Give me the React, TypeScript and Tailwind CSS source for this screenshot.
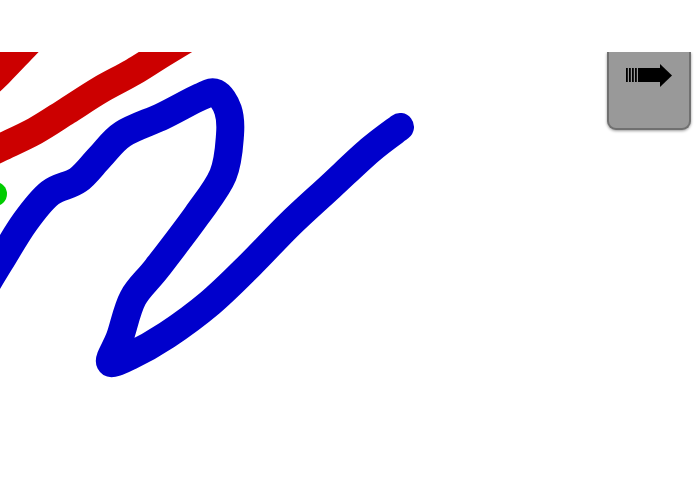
import React from "react";

type P = [number, number];

function smooth(points: P[]): string {
  if (points.length < 2) return "";
  let d = `M ${points[0][0]} ${points[0][1]}`;
  for (let i = 0; i < points.length - 1; i++) {
    const p0 = points[i - 1] || points[i];
    const p1 = points[i];
    const p2 = points[i + 1];
    const p3 = points[i + 2] || p2;
    const c1x = p1[0] + (p2[0] - p0[0]) / 6;
    const c1y = p1[1] + (p2[1] - p0[1]) / 6;
    const c2x = p2[0] - (p3[0] - p1[0]) / 6;
    const c2y = p2[1] - (p3[1] - p1[1]) / 6;
    d += ` C ${c1x} ${c1y} ${c2x} ${c2y} ${p2[0]} ${p2[1]}`;
  }
  return d;
}

const blue: P[] = [
  [-20, 295],
  [0, 262],
  [25, 222],
  [50, 193],
  [78, 180],
  [100, 157],
  [123, 134],
  [163, 116],
  [200, 97],
  [216, 93],
  [228, 110],
  [230, 135],
  [223, 175],
  [197, 215],
  [157, 268],
  [133, 298],
  [120, 337],
  [110, 362],
  [130, 356],
  [167, 335],
  [210, 303],
  [250, 265],
  [290, 224],
  [330, 187],
  [370, 150],
  [400, 127],
];

const red2: P[] = [
  [-20, 158],
  [0, 148],
  [35, 131],
  [67, 111],
  [100, 90],
  [133, 72],
  [165, 52],
  [215, 22],
];

const red1: P[] = [
  [-25, 96],
  [0, 72],
  [24, 47],
  [52, 18],
];

function ArrowIcon() {
  return (
    <svg width="46" height="24" viewBox="0 0 46 24">
      <rect x="0" y="4" width="1.8" height="14" fill="#000" />
      <rect x="3" y="4" width="1.8" height="14" fill="#000" />
      <rect x="6" y="4" width="1.8" height="14" fill="#000" />
      <rect x="9" y="4" width="1.8" height="14" fill="#000" />
      <rect x="12" y="4" width="23" height="14" fill="#000" />
      <polygon points="34,0 46,11.5 34,23" fill="#000" />
    </svg>
  );
}

export default function App() {
  return (
    <div className="w-[695px] h-[494px] bg-white flex flex-col overflow-hidden">
      <div className="h-[52px] shrink-0 bg-white" />
      <div className="relative flex-1 overflow-hidden bg-white">
        <svg
          className="block"
          width="695"
          height="442"
          viewBox="0 52 695 442"
        >
          <path
            d={smooth(red1)}
            fill="none"
            stroke="#cc0000"
            strokeWidth="28"
            strokeLinecap="round"
            strokeLinejoin="round"
          />
          <path
            d={smooth(red2)}
            fill="none"
            stroke="#cc0000"
            strokeWidth="28"
            strokeLinecap="round"
            strokeLinejoin="round"
          />
          <circle cx="-5" cy="194" r="12" fill="#00cc00" />
          <path
            d={smooth(blue)}
            fill="none"
            stroke="#0000cc"
            strokeWidth="28"
            strokeLinecap="round"
            strokeLinejoin="round"
          />
        </svg>
        <button className="absolute top-0 right-[4px] w-[84px] h-[78px] bg-[#999999] border-x-2 border-b-2 border-[#707070] rounded-b-[9px] shadow-[0_1px_3px_rgba(0,0,0,0.4)] flex justify-center items-start pt-[12px]">
          <ArrowIcon />
        </button>
      </div>
    </div>
  );
}
